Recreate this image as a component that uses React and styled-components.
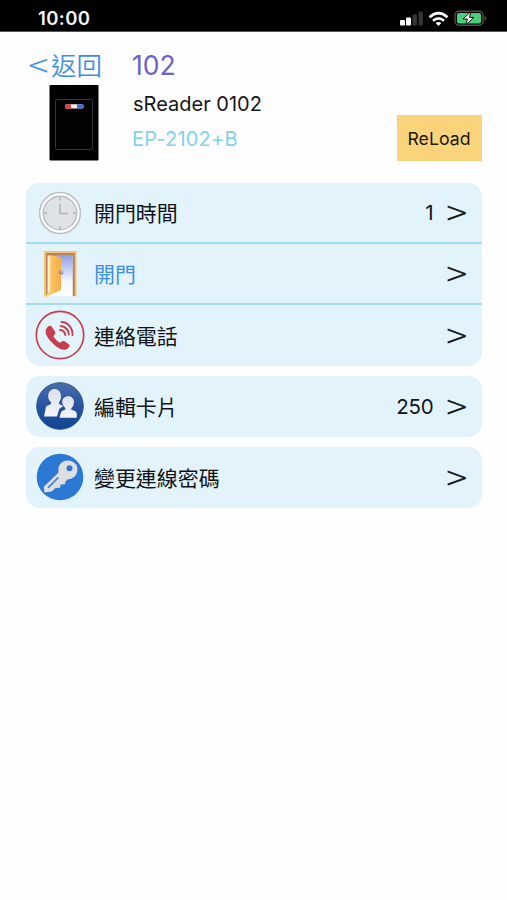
import React from "react";
import styled, { createGlobalStyle } from "styled-components";

const GlobalStyle = createGlobalStyle`
  * { box-sizing: border-box; }
  html, body { margin: 0; background: #fff; }
  body { font-family: Inter, "Noto Sans CJK TC", sans-serif; color: #101417; }
  svg { display: block; flex: none; }
`;

const Screen = styled.div`
  width: 507px;
  height: 900px;
  overflow: hidden;
  background: #fefefe;
`;

const StatusBar = styled.div`
  height: 32px;
  padding: 5px 19px 0 38px;
  display: flex;
  align-items: flex-start;
  justify-content: space-between;
  background: #000;
  border-bottom: 1px solid #555;
  color: #f4f4f4;
`;

const Clock = styled.time`
  font-size: 18.5px;
  line-height: 27px;
  font-weight: 600;
  letter-spacing: 0.4px;
`;

const NavBar = styled.nav`
  height: 53px;
  padding: 14px 0 0 28px;
  display: flex;
  align-items: flex-start;
`;

const BackLink = styled.a`
  width: 104px;
  display: flex;
  color: #3f8fe2;
  font-size: 25.5px;
  line-height: 39px;
  font-weight: 350;
`;

const BackMark = styled.span`
  width: 23px;
  margin-left: -1px;
  margin-right: 1px;
  font-family: "DejaVu Sans", sans-serif;
  font-size: 27px;
  font-weight: 200;
  line-height: 38px;
  -webkit-text-stroke: 0.5px currentColor;
`;

const Title = styled.h1`
  margin: 0;
  font-size: 26.5px;
  line-height: 39px;
  font-weight: 400;
  color: #6a62c6;
`;

const Device = styled.section`
  height: 98px;
  padding: 0 25px 0 49px;
  display: flex;
  align-items: flex-start;
`;

const DeviceInfo = styled.div`
  flex: 1;
  margin-left: 34px;
  padding-top: 5px;
`;

const DeviceName = styled.div`
  font-size: 20px;
  line-height: 28px;
  letter-spacing: ${(p) => p.$tracking || 0};
  color: #151515;
`;

const DeviceModel = styled(DeviceName)`
  margin-top: 7px;
  margin-left: -1px;
  color: #84d0f0;
`;

const ReloadButton = styled.button`
  width: 85px;
  height: 46px;
  margin-top: 30px;
  padding: 0 1px 0 0;
  border: 0;
  background: #fad47a;
  color: #1d1809;
  font: 400 17.7px Inter, sans-serif;
`;

const Groups = styled.main`
  padding: 0 25.5px;
  display: flex;
  flex-direction: column;
  gap: 9.5px;
`;

const Group = styled.section`
  border-radius: 14px;
  background: #e2f3fc;
  overflow: hidden;
`;

const Row = styled.div`
  height: 61.4px;
  padding-left: 9px;
  display: flex;
  align-items: center;
  &:not(:last-child) {
    height: 61px;
    border-bottom: 2px solid #a3dbf2;
  }
  &:last-child svg { margin-top: -1.4px; }
`;

const IconSlot = styled.div`
  width: 50px;
  display: flex;
  justify-content: center;
`;

const Label = styled.span`
  flex: 1;
  margin-left: 9.5px;
  padding-top: 2.8px;
  font-size: 20.95px;
  line-height: 30px;
  color: ${(p) => (p.$active ? "#3f8fe2" : "#101417")};
`;

const Value = styled.span`
  padding-top: 1.5px;
  font-size: 20.5px;
  line-height: 30px;
  letter-spacing: -0.2px;
`;

const Arrow = styled.span`
  width: 48px;
  padding: 1.2px 0 0 11.5px;
  font-family: "DejaVu Sans", sans-serif;
  font-size: 28px;
  line-height: 30px;
  font-weight: 200;
  -webkit-text-stroke: 0.6px currentColor;
`;

const Indicators = styled.div`
  display: flex;
  align-items: center;
  padding-top: 4px;
`;

const StatusIcons = () => (
  <Indicators>
    <svg width="88" height="19" viewBox="0 0 88 19">
      <rect x="0" y="11" width="5" height="5.5" rx="1" fill="#fff" />
      <rect x="6" y="8.5" width="5" height="8" rx="1" fill="#fff" />
      <rect x="12.5" y="5.5" width="4.5" height="11" rx="1" fill="#343434" />
      <rect x="18.5" y="2.5" width="4.5" height="14" rx="1" fill="#343434" />
      <g fill="none" stroke="#fff" strokeWidth="2.7">
        <path d="M29.5 8.2Q38.5 .2 47.5 8.2" />
        <path d="M33 11.8Q38.5 7 44 11.8" />
      </g>
      <path d="M35.6 14Q38.5 11.8 41.4 14L38.5 17Z" fill="#fff" />
      <rect x="55" y="2.2" width="28" height="14" rx="4" fill="none" stroke="#515151" strokeWidth="1.4" />
      <rect x="57" y="4" width="24" height="10.5" rx="2" fill="#4bcf7b" />
      <path d="M84.5 6.5Q88 9.3 84.5 12Z" fill="#515151" />
      <path d="M71 2.5L63 10H67.5L65.5 16L74 8.4H69.5Z" fill="#fff" stroke="#111" strokeWidth="1" />
    </svg>
  </Indicators>
);

const ReaderPicture = () => (
  <svg width="50" height="76" viewBox="0 0 50 76">
    <rect x=".5" width="49" height="75.5" rx="1" fill="#000" />
    <rect x="6.5" y="14.5" width="37" height="50" rx="2" fill="#020202" stroke="#393939" />
    <rect x="16" y="19.2" width="18.5" height="4.3" rx="1.5" fill="#eee" />
    <path d="M17.5 19.2H22V23.5H17.5Q16 23.5 16 21.4T17.5 19.2Z" fill="#d83d43" />
    <path d="M28 19.2H33Q34.5 19.2 34.5 21.4T33 23.5H28Z" fill="#4968cf" />
  </svg>
);

const ClockIcon = () => (
  <svg width="50" height="50" viewBox="0 0 50 50">
    <circle cx="25" cy="25" r="20.4" fill="#fff" stroke="#b8bcc0" strokeWidth="1.5" />
    <circle cx="25" cy="25" r="16.8" fill="#dfe2e6" stroke="#b8bcc0" strokeWidth="1.4" />
    <path d="M25 16V25.5H33" fill="none" stroke="#b0b4b8" strokeWidth="1.6" />
    <path d="M25 9V12.5M25 38V41.5M9 25H12M38 25H41" stroke="#b0b4b8" strokeWidth="1.4" />
  </svg>
);

const DoorIcon = () => (
  <svg width="50" height="50" viewBox="0 0 50 50">
    <defs>
      <linearGradient id="sky" x2="0" y2="1">
        <stop stopColor="#8b9fe8" /><stop offset=".65" stopColor="#f5f7ff" /><stop offset="1" stopColor="#fff" />
      </linearGradient>
      <linearGradient id="wood"><stop stopColor="#ffc96a" /><stop offset="1" stopColor="#f4ad48" /></linearGradient>
    </defs>
    <path d="M9 2H41.5V47.5H38V5.5H12.5V47.5H9Z" fill="#f5c46a" />
    <path d="M11 4H39.8V47H37.5V6H13V45H11Z" fill="#b58263" />
    <path d="M13 6H37.5V47H13Z" fill="url(#sky)" />
    <path d="M12.5 6L26 8V41L12.5 47Z" fill="url(#wood)" />
    <path d="M12.8 6.5V44L15.2 43V8Z" fill="#fff1d0" />
    <circle cx="26.2" cy="23.5" r="2.1" fill="#827d87" /><circle cx="26.5" cy="23" r=".9" fill="#dedede" />
  </svg>
);

const PhoneIcon = () => (
  <svg width="50" height="50" viewBox="0 0 50 50">
    <circle cx="25" cy="25" r="23.7" fill="none" stroke="#c63f4e" strokeWidth="1.7" />
    <path d="M11.8 18C13.8 15.5 15.5 15 17 17L20 21.5C21 23 20.2 24.4 18.3 26C20 29.3 22.2 31.3 25.2 32.8C27 30.7 28.6 30.5 30 31.4L33.8 34.2C35.5 35.5 34.7 37 32.5 38.8C29 41.5 22 38.4 17 32.5C11.4 27 9 21.5 11.8 18Z" fill="#c63f4e" />
    <g fill="none" stroke="#c63f4e" strokeWidth="1.9" strokeLinecap="round">
      <path d="M26.5 12C32.5 12 38 17.8 37.5 25" />
      <path d="M25.7 16C30.5 16.5 33.8 20 33.8 24.5" />
      <path d="M25 20C28 20.2 30 22.5 30.3 25" />
    </g>
  </svg>
);

const PeopleIcon = () => (
  <svg width="50" height="50" viewBox="0 0 50 50">
    <defs>
      <linearGradient id="navy" x2="0" y2="1"><stop stopColor="#496eaa" /><stop offset=".5" stopColor="#2853a0" /><stop offset="1" stopColor="#0f4593" /></linearGradient>
      <linearGradient id="silver" x2="0" y2="1"><stop stopColor="#dce1ec" /><stop offset="1" stopColor="#f3f5fa" /></linearGradient>
    </defs>
    <circle cx="25" cy="25" r="23.3" fill="url(#navy)" stroke="#315890" />
    <path d="M13.2 15C13.2 5.8 25.8 5.8 26 15C26 18 25.4 19.5 24 21.2V23L28.2 25L24.2 28L22 35.5H9L11 25.5L16 23V21Q13.2 19 13.2 15Z" fill="url(#silver)" />
    <path d="M27.2 20.7C28 13.5 38.7 13.5 39 21Q39 25 36.3 27.2V28.7Q41.7 30 41.8 32.5V36.8H24.5L26 31Q27.5 29 30.4 28.5V27Q27.4 24.8 27.2 20.7Z" fill="url(#silver)" />
  </svg>
);

const KeyIcon = () => (
  <svg width="50" height="50" viewBox="0 0 50 50">
    <circle cx="25" cy="25" r="23.3" fill="#2b79d5" />
    <path
      fillRule="evenodd"
      d="M24.5 13Q28 7.5 35 8.7Q43.5 11 42.3 19.5Q40.5 26.8 32.5 27.4L30.6 29.2L30 32.3L25.6 32.5L25 35.8L20.5 36L16.5 39.4L9.4 40.4L8.8 34.8L23.4 20.8Q22.6 16 24.5 13ZM31.5 16.3A3 3 0 1 0 37.5 16.3A3 3 0 1 0 31.5 16.3Z"
      fill="#dfdfe2"
    />
    <path d="M23.4 25.3L13 35.8" stroke="#4a84cc" strokeWidth="1.8" />
  </svg>
);

const groups = [
  [
    { label: "開門時間", value: "1", Icon: ClockIcon },
    { label: "開門", active: true, Icon: DoorIcon },
    { label: "連絡電話", Icon: PhoneIcon },
  ],
  [{ label: "編輯卡片", value: "250", Icon: PeopleIcon }],
  [{ label: "變更連線密碼", Icon: KeyIcon }],
];

export default function App() {
  return (
    <Screen>
      <GlobalStyle />
      <StatusBar>
        <Clock>10:00</Clock>
        <StatusIcons />
      </StatusBar>
      <NavBar>
        <BackLink><BackMark>&lt;</BackMark>返回</BackLink>
        <Title>102</Title>
      </NavBar>
      <Device>
        <ReaderPicture />
        <DeviceInfo>
          <DeviceName>sReader 0102</DeviceName>
          <DeviceModel $tracking="0.2px">EP-2102+B</DeviceModel>
        </DeviceInfo>
        <ReloadButton>ReLoad</ReloadButton>
      </Device>
      <Groups>
        {groups.map((rows) => (
          <Group key={rows[0].label}>
            {rows.map(({ label, value, active, Icon }) => (
              <Row key={label}>
                <IconSlot><Icon /></IconSlot>
                <Label $active={active}>{label}</Label>
                {value && <Value>{value}</Value>}
                <Arrow>&gt;</Arrow>
              </Row>
            ))}
          </Group>
        ))}
      </Groups>
    </Screen>
  );
}
